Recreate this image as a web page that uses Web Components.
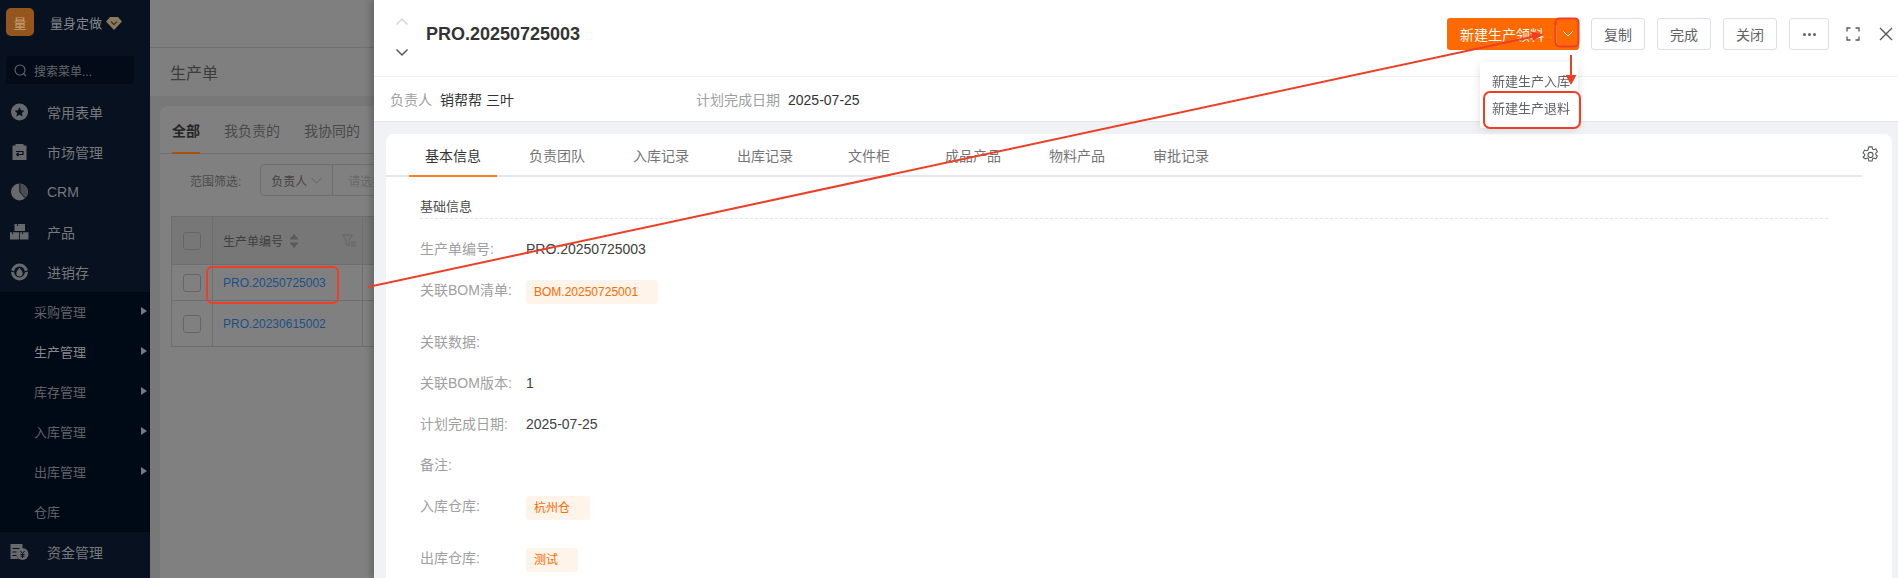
<!DOCTYPE html>
<html lang="zh">
<head>
<meta charset="utf-8">
<title>生产单</title>
<style>
  html, body { margin: 0; height: 578px; overflow: hidden; }
  body {
    display: flex;
    font-family: "Liberation Sans", "Noto Sans CJK SC", sans-serif;
    font-size: 14px;
    color: #333;
    background: #7f7f7f;
  }
</style>
</head>
<body>
<side-nav></side-nav>
<list-page></list-page>
<detail-drawer></detail-drawer>
<mark-layer></mark-layer>

<script>
const icons = {
  star: `<circle cx="9.500" cy="9" r="8.500" fill="currentColor"/><path d="M9.500 4.200l1.500 3.100 3.400.4-2.500 2.300.7 3.400-3.100-1.700-3.100 1.700.7-3.400-2.500-2.300 3.400-.4z" fill="#07111f"/>`,
  board: `<path d="M2.500 2.500h3V1h8v1.500h3V17h-14z" fill="currentColor"/><path d="M6 8.500h7v3H7M8.500 9.800L6.700 11.500l1.800 1.700" fill="none" stroke="#07111f" stroke-width="1.200"/>`,
  pie: `<circle cx="9.500" cy="9" r="8.500" fill="currentColor"/><path d="M10 .8a8.300 8.300 0 0 1 5 14l-5-5.800z" fill="#4a4c50"/><path d="M9.800 .5V9l5.500 6" fill="none" stroke="#07111f" stroke-width="1"/>`,
  boxes: `<path d="M4.500 1H15v7H4.500zM0 9.200h9v7.300H0zM9.800 9.200H18.500v7.300H9.800z" fill="currentColor"/><path d="M7.500 1v2M2.500 9.200v2M12.500 9.200v2" stroke="#07111f"/>`,
  stock: `<circle cx="9.500" cy="9" r="8.500" fill="currentColor"/><circle cx="9.500" cy="9" r="5.400" fill="#07111f"/><path d="M9.500 4.800c2 2.400 3.200 3.900 3.200 5.400a3.200 3.200 0 0 1-6.400 0c0-1.500 1.200-3 3.200-5.400z" fill="currentColor"/><path d="M0 7.500l4.500 1.500M19 7.500L14.500 9" stroke="#07111f" stroke-width="1.200"/>`,
  fund: `<path d="M.5 1h12v5a6 6 0 0 0-4 10H.5z" fill="currentColor"/><circle cx="12.500" cy="11" r="6" fill="currentColor"/><path d="M2.500 5.500h7M2.500 9h4M2.500 12.500h4" stroke="#07111f"/><path d="M10.500 8l2 2.500 2-2.500M12.500 10.500V15M10.500 11.500h4M10.500 13.300h4" stroke="#07111f" fill="none"/>`
};

class NavItem extends HTMLElement {
  connectedCallback() {
    const icon = this.getAttribute("icon");
    this.shadow = this.attachShadow({ mode: "open" });
    this.shadow.innerHTML = `
      <style>
        :host { display: flex; align-items: center; height: 40px; color: #77787b; font-size: 14px; position: relative; }
        :host([sub]) { font-size: 13px; color: #606265; padding-left: 34px; box-sizing: border-box; padding-bottom: 2px; }
        :host([active]) { color: #86878a; }
        svg.icon { width: 19px; height: 18px; margin: 0 18px 0 10px; flex: none; color: #68696c; }
        .caret { margin-left: auto; margin-right: 3px; width: 0; height: 0; border-left: 6px solid #77797c; border-top: 4.500px solid transparent; border-bottom: 4.500px solid transparent; }
      </style>
      ${icon ? `<svg class="icon" viewBox="0 0 19 18">${icons[icon]}</svg>` : ""}
      <slot></slot>
      ${this.hasAttribute("caret") ? `<i class="caret"></i>` : ""}
    `;
  }
}
customElements.define("nav-item", NavItem);

class SideNav extends HTMLElement {
  constructor() {
    super();
    this.shadow = this.attachShadow({ mode: "open" });
    this.shadow.innerHTML = `
      <style>
        :host { display: flex; flex-direction: column; width: 150px; flex: none; height: 578px; background: #07111f; overflow: hidden; }
        .brand { display: flex; align-items: center; height: 44px; padding: 0 0 0 6px; color: #85868a; font-size: 13px; }
        .logo { width: 28px; height: 28px; border-radius: 5px; background: #94561c; color: #c5a078; display: flex; align-items: center; justify-content: center; font-size: 13px; margin-right: 16px; }
        .brand svg { width: 16px; height: 14px; margin-left: 4px; margin-top: 2px; }
        .search { display: flex; align-items: center; gap: 7px; height: 28px; margin: 12px 16px 8px 6px; padding-left: 8px; border-radius: 4px; background: #020b17; color: #65676a; font-size: 12px; }
        .search svg { width: 13px; height: 13px; }
        .sub { background: #000a17; display: flex; flex-direction: column; }
      </style>
      <div class="brand">
        <span class="logo">量</span>量身定做
        <svg viewBox="0 0 16 14"><path d="M4 1h8l4 4.500L8 14 0 5.500z" fill="#8a7a5e"/><path d="M5 5.500l3 3 3-3" fill="none" stroke="#3f3626" stroke-width="1.300"/></svg>
      </div>
      <div class="search">
        <svg viewBox="0 0 13 13"><circle cx="6" cy="6" r="5" fill="none" stroke="#65676a" stroke-width="1.100"/><path d="M9.500 9.500L12 12" stroke="#65676a" stroke-width="1.100"/></svg>
        搜索菜单...
      </div>
      <nav-item icon="star">常用表单</nav-item>
      <nav-item icon="board">市场管理</nav-item>
      <nav-item icon="pie">CRM</nav-item>
      <nav-item icon="boxes">产品</nav-item>
      <nav-item icon="stock">进销存</nav-item>
      <div class="sub">
        <nav-item sub caret>采购管理</nav-item>
        <nav-item sub caret active>生产管理</nav-item>
        <nav-item sub caret>库存管理</nav-item>
        <nav-item sub caret>入库管理</nav-item>
        <nav-item sub caret>出库管理</nav-item>
        <nav-item sub>仓库</nav-item>
      </div>
      <nav-item icon="fund">资金管理</nav-item>
    `;
  }
}
customElements.define("side-nav", SideNav);

class ListPage extends HTMLElement {
  constructor() {
    super();
    this.shadow = this.attachShadow({ mode: "open" });
    this.shadow.innerHTML = `
      <style>
        :host { display: flex; flex-direction: column; flex: 1; min-width: 0; height: 578px; background: #787878; color: #4a4a4a; overflow: hidden; }
        .top { height: 47px; background: #7f7f7f; border-bottom: 1px solid #707070; flex: none; }
        .title { height: 48px; background: #7f7f7f; display: flex; align-items: center; padding-left: 20px; font-size: 16px; color: #3c3c3c; flex: none; }
        .card { margin: 10px 0 0 10px; background: #808080; border-radius: 8px 0 0 0; flex: 1; }
        .tabs { display: flex; gap: 24px; height: 47px; padding-left: 12px; align-items: center; border-bottom: 1px solid #707070; color: #494949; position: relative; }
        .tabs b { color: #262626; position: relative; align-self: stretch; display: flex; align-items: center; }
        .tabs b::after { content: ""; position: absolute; left: 0; right: 0; bottom: -1px; height: 2px; background: #a7520c; }
        .filter { display: flex; align-items: center; height: 32px; margin-top: 10px; padding-left: 30px; font-size: 12px; color: #4b4b4b; }
        .select { display: flex; align-items: center; margin-left: 19px; height: 30px; border: 1px solid #707070; border-radius: 4px 0 0 4px; }
        .select span { display: flex; align-items: center; height: 100%; padding: 0 10px; font-size: 12px; color: #434343; }
        .select span + span { border-left: 1px solid #707070; padding-left: 15px; color: #6a6a6a; padding-right: 60px; }
        .select svg { width: 11px; height: 7px; margin-left: 4px; }
        .table { display: grid; grid-template-columns: 41px 150px 1fr; margin: 20px 0 0 11px; border-top: 1px solid #6e6e6e; border-left: 1px solid #6e6e6e; font-size: 12px; }
        .cell { display: flex; align-items: center; border-right: 1px solid #6e6e6e; border-bottom: 1px solid #6e6e6e; padding-left: 10px; height: 35px; }
        .head { height: 47px; background: #777; color: #3f3f3f; }
        .tall { height: 45px; }
        .check { justify-content: center; padding: 0; }
        .check i { width: 16px; height: 16px; border: 1px solid #646668; border-radius: 3px; }
        .link { color: #1d4f87; }
        .sort { margin-left: 6px; width: 10px; height: 14px; }
        .filt { margin-left: auto; margin-right: 6px; width: 14px; height: 13px; }
      </style>
      <div class="top"></div>
      <div class="title">生产单</div>
      <div class="card">
        <div class="tabs"><b>全部</b><span>我负责的</span><span>我协同的</span></div>
        <div class="filter">范围筛选:
          <div class="select">
            <span>负责人<svg viewBox="0 0 11 7"><path d="M.5 1l5 5 5-5" fill="none" stroke="#636363"/></svg></span>
            <span>请选择</span>
          </div>
        </div>
        <div class="table">
          <div class="cell head check"><i></i></div>
          <div class="cell head">生产单编号
            <svg class="sort" viewBox="0 0 10 14"><path d="M5 0l4.500 5.500h-9zM5 14L.5 8.500h9z" fill="#5a5a5a"/></svg>
            <svg class="filt" viewBox="0 0 14 13"><path d="M.5 1h10L7 6v6L4 10.500V6z" fill="none" stroke="#666"/><path d="M9 8h5M9 10h5M9 12h5" stroke="#666"/></svg>
          </div>
          <div class="cell head"></div>
          <div class="cell check"><i></i></div><div class="cell link">PRO.20250725003</div><div class="cell"></div>
          <div class="cell check tall"><i></i></div><div class="cell link tall">PRO.20230615002</div><div class="cell tall"></div>
        </div>
      </div>
    `;
  }
}
customElements.define("list-page", ListPage);

class ActionButton extends HTMLElement {
  constructor() {
    super();
    this.shadow = this.attachShadow({ mode: "open" });
    this.shadow.innerHTML = `
      <style>
        :host { display: flex; align-items: center; justify-content: center; box-sizing: border-box; height: 32px; width: 54px; border: 1px solid #dcdfe6; border-radius: 3px; background: #fff; color: #606266; font-size: 14px; }
        :host([narrow]) { width: 40px; }
      </style>
      <slot></slot>
    `;
  }
}
customElements.define("action-button", ActionButton);

class DrawerHeader extends HTMLElement {
  constructor() {
    super();
    this.shadow = this.attachShadow({ mode: "open" });
    this.shadow.innerHTML = `
      <style>
        :host { display: flex; align-items: center; height: 68px; padding-bottom: 8px; background: #fff; border-bottom: 1px solid #eef0f3; flex: none; }
        .pager { display: flex; flex-direction: column; gap: 22px; width: 48px; padding-left: 4px; margin-top: 5px; align-items: center; flex: none; }
        .pager svg { width: 14px; height: 9px; display: block; }
        h1 { margin: 0; font-size: 18px; font-weight: 700; color: #333; }
        .actions { margin-left: auto; display: flex; align-items: center; gap: 12px; }
        .split { display: flex; width: 132px; height: 32px; background: #ff6a00; border-radius: 3px; color: #fff; font-size: 14px; }
        .split span { display: flex; align-items: center; padding-left: 13px; width: 96px; white-space: nowrap; }
        .split i { display: flex; align-items: center; justify-content: center; flex: 1; position: relative; }
        .split i::before { content: ""; position: absolute; left: 0; top: 7px; bottom: 7px; width: 1px; background: #ffb27f; }
        .split svg { width: 10px; height: 6px; }
        .dots { display: flex; gap: 2px; }
        .dots b { width: 3px; height: 3px; border-radius: 50%; background: #606266; }
        .win { display: flex; align-items: center; gap: 18px; margin-left: 5px; padding-right: 5px; }
        .win svg { display: block; }
      </style>
      <div class="pager">
        <svg viewBox="0 0 14 9"><path d="M1.500 7.500L7 2l5.500 5.500" fill="none" stroke="#d5d7dc" stroke-width="1.500"/></svg>
        <svg viewBox="0 0 14 9"><path d="M1.500 1.500L7 7l5.500-5.500" fill="none" stroke="#55585e" stroke-width="1.500"/></svg>
      </div>
      <h1>PRO.20250725003</h1>
      <div class="actions">
        <div class="split"><span>新建生产领料</span><i><svg viewBox="0 0 10 6"><path d="M.5 .5L5 5 9.500 .5" fill="none" stroke="#fff"/></svg></i></div>
        <action-button>复制</action-button>
        <action-button>完成</action-button>
        <action-button>关闭</action-button>
        <action-button narrow><span class="dots"><b></b><b></b><b></b></span></action-button>
        <div class="win">
          <svg width="14" height="14" viewBox="0 0 14 14"><path d="M1 4.500V1h3.500M9.500 1H13v3.500M13 9.500V13H9.500M4.500 13H1V9.500" fill="none" stroke="#55585e" stroke-width="1.300"/></svg>
          <svg width="14" height="14" viewBox="0 0 14 14" style="margin-left:1px"><path d="M1 1l12 12M13 1L1 13" fill="none" stroke="#55585e" stroke-width="1.300"/></svg>
        </div>
      </div>
    `;
  }
}
customElements.define("drawer-header", DrawerHeader);

class TabStrip extends HTMLElement {
  constructor() {
    super();
    this.shadow = this.attachShadow({ mode: "open" });
    const names = ["基本信息", "负责团队", "入库记录", "出库记录", "文件柜", "成品产品", "物料产品", "审批记录"];
    this.shadow.innerHTML = `
      <style>
        :host { display: flex; gap: 16px; height: 41px; margin-right: 30px; padding-left: 23px; border-bottom: 2px solid #e4e7ed; flex: none; }
        span { width: 88px; flex: none; box-sizing: border-box; display: flex; align-items: center; justify-content: center; height: 43px; color: #757575; font-size: 14px; padding-bottom: 2px; }
        span.on { color: #333; border-bottom: 2px solid #ff7f24; padding-bottom: 0; }
      </style>
      ${names.map((n, i) => `<span class="${i === 0 ? "on" : ""}">${n}</span>`).join("")}
    `;
  }
}
customElements.define("tab-strip", TabStrip);

class InfoTag extends HTMLElement {
  constructor() {
    super();
    this.shadow = this.attachShadow({ mode: "open" });
    this.shadow.innerHTML = `
      <style>
        :host { display: inline-flex; align-items: center; height: 24px; padding: 0 20px 0 8px; border-radius: 3px; background: #fff4e9; color: #ff6a00; font-size: 12px; }
      </style>
      <slot></slot>
    `;
  }
}
customElements.define("info-tag", InfoTag);

class FieldRow extends HTMLElement {
  constructor() {
    super();
    this.shadow = this.attachShadow({ mode: "open" });
    this.shadow.innerHTML = `
      <style>
        :host { display: flex; align-items: flex-start; line-height: 20px; margin-top: 21px; color: #404040; font-size: 14px; }
        :host([tagged]) { margin-bottom: 7px; }
        label { width: 106px; flex: none; color: #a0a0a0; }
      </style>
      <label>${this.getAttribute("label")}</label>
      <slot></slot>
    `;
  }
}
customElements.define("field-row", FieldRow);

class DetailDrawer extends HTMLElement {
  constructor() {
    super();
    this.shadow = this.attachShadow({ mode: "open" });
    this.shadow.innerHTML = `
      <style>
        :host { position: fixed; left: 374px; top: 0; width: 1524px; height: 578px; display: flex; flex-direction: column; background: #f0f2f5; box-shadow: -4px 0 6px rgba(0,0,0,.18); overflow: hidden; }
        .meta { display: flex; align-items: center; height: 44px; background: #fff; border-bottom: 1px solid #e4e7ed; padding-left: 16px; font-size: 14px; flex: none; }
        .meta em { font-style: normal; color: #a0a0a0; margin-right: 8px; }
        .meta .owner { width: 306px; }
        .card { flex: 1; margin: 12px 6px 0 12px; background: #fff; border-radius: 8px 8px 0 0; position: relative; }
        .gear { position: absolute; right: 13px; top: 12px; width: 17px; height: 17px; }
        .body { padding: 20px 0 0 34px; }
        h2 { margin: 0 64px 0 0; height: 21px; font-size: 13px; font-weight: 400; color: #4b4b4b; border-bottom: 1px dashed #e4e7ed; line-height: 20px; }
        .rows { display: flex; flex-direction: column; margin-top: -1px; }
      </style>
      <drawer-header></drawer-header>
      <div class="meta">
        <span class="owner"><em>负责人</em>销帮帮 三叶</span>
        <span><em>计划完成日期</em>2025-07-25</span>
      </div>
      <div class="card">
        <tab-strip></tab-strip>
        <svg class="gear" viewBox="0 0 16 16"><path d="M6.500 .8h3l.4 2 1.200.7 1.900-.7 1.500 2.600-1.500 1.300v1.500l1.500 1.300-1.500 2.600-1.900-.7-1.200.7-.4 2h-3l-.4-2-1.200-.7-1.900.7L1 10.500l1.500-1.300V7.700L1 6.400l1.500-2.600 1.900.7 1.200-.7z" fill="none" stroke="#55585e"/><circle cx="8" cy="8.400" r="2.400" fill="none" stroke="#55585e"/></svg>
        <div class="body">
          <h2>基础信息</h2>
          <div class="rows">
            <field-row label="生产单编号:">PRO.20250725003</field-row>
            <field-row label="关联BOM清单:" tagged><info-tag>BOM.20250725001</info-tag></field-row>
            <field-row label="关联数据:"></field-row>
            <field-row label="关联BOM版本:">1</field-row>
            <field-row label="计划完成日期:">2025-07-25</field-row>
            <field-row label="备注:"></field-row>
            <field-row label="入库仓库:" tagged><info-tag>杭州仓</info-tag></field-row>
            <field-row label="出库仓库:" tagged><info-tag>测试</info-tag></field-row>
          </div>
        </div>
      </div>
      <drop-menu></drop-menu>
    `;
  }
}

class DropMenu extends HTMLElement {
  constructor() {
    super();
    this.shadow = this.attachShadow({ mode: "open" });
    this.shadow.innerHTML = `
      <style>
        :host { position: absolute; left: 1106px; top: 62px; width: 98px; height: 66px; box-sizing: border-box; padding-top: 5px; background: #fff; border-radius: 3px; box-shadow: 0 2px 10px rgba(0,0,0,.12); font-size: 13px; color: #606266; }
        div { height: 27px; display: flex; align-items: center; padding-left: 12px; white-space: nowrap; }
      </style>
      <div>新建生产入库</div>
      <div>新建生产退料</div>
    `;
  }
}
customElements.define("drop-menu", DropMenu);
customElements.define("detail-drawer", DetailDrawer);

// red annotation marks drawn on top of the screenshot
class MarkLayer extends HTMLElement {
  constructor() {
    super();
    this.shadow = this.attachShadow({ mode: "open" });
    this.shadow.innerHTML = `
      <style>
        :host { position: fixed; inset: 0; pointer-events: none; }
        svg { display: block; }
      </style>
      <svg width="1898" height="578" fill="none" stroke="#ec3f26" stroke-width="2">
        <rect x="207" y="267" width="131" height="36" rx="5"/>
        <rect x="1555.500" y="18.500" width="23" height="28" rx="4"/>
        <rect x="1484" y="92" width="96" height="36" rx="6"/>
        <path d="M368 287L1536 36"/>
        <path d="M1544 34.500l-13-3 2 9z" fill="#ec3f26" stroke="none"/>
        <path d="M1571 55v24"/>
        <path d="M1571 85l-5.500-10h11z" fill="#ec3f26" stroke="none"/>
      </svg>
    `;
  }
}
customElements.define("mark-layer", MarkLayer);
</script>
</body>
</html>
